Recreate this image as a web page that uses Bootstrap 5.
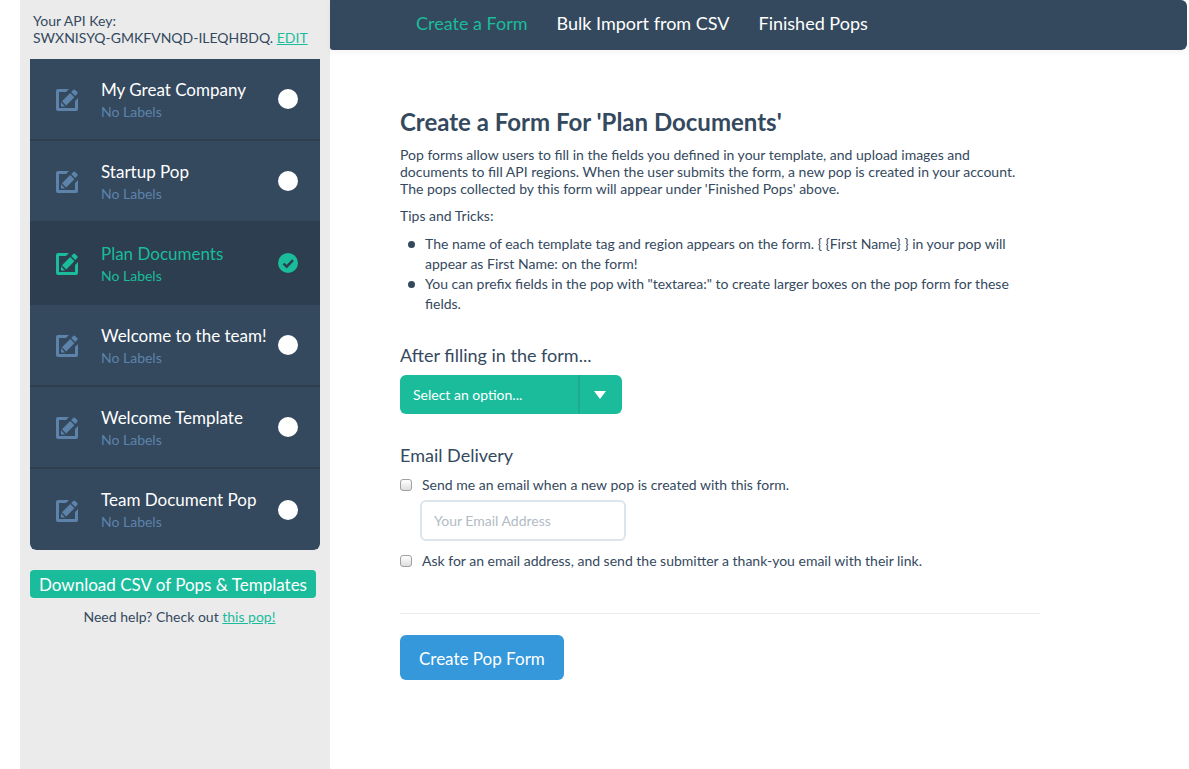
<!DOCTYPE html>
<html lang="en">
<head>
<meta charset="utf-8">
<meta name="viewport" content="width=device-width, initial-scale=1">
<title>Create a Form</title>
<link href="https://cdn.jsdelivr.net/npm/bootstrap@5.3.0/dist/css/bootstrap.min.css" rel="stylesheet">
<style>
  :root { --navy: #34495e; --navy-dark: #2c3e50; --teal: #1abc9c; --steel: #5d83ab; }
  body { font: 14px/17px Lato, sans-serif; color: var(--navy); background: #fff; }
  a { color: var(--teal); }
  .side { flex: 0 0 310px; min-width: 0; margin-left: 20px; padding: 12px 10px; background: #ebebeb; }
  .api-key { padding: 0 3px; margin-bottom: 13px; }
  .pop-list { border-radius: 0 0 6px 6px; overflow: hidden; margin-bottom: 20px; }
  .pop-item { display: flex; align-items: center; height: 82px; padding: 2px 22px 2px 26px; border: 0; border-bottom: 2px solid var(--navy-dark); border-radius: 0; background: var(--navy); color: #fff; cursor: pointer; }
  .pop-item:last-child { border-bottom: 0; height: 81px; }
  .pop-item .glyph { width: 22px; height: 22px; margin: 2px 23px 0 0; color: var(--steel); flex: none; }
  .pop-name { font-size: 17px; line-height: 23px; white-space: nowrap; }
  .pop-labels { color: var(--steel); line-height: 22px; }
  .pop-text { padding-top: 2px; }
  .pop-item.chosen { background: var(--navy-dark); color: var(--teal); }
  .chosen .glyph, .chosen .pop-labels { color: var(--teal); }
  .pop-item .form-check-input { width: 20px; height: 20px; margin: 0 0 0 auto; border: 0; flex: none; background-color: #fff; }
  .pop-item .form-check-input:checked { background-color: var(--teal); background-size: 20px; background-image: url("data:image/svg+xml,%3Csvg xmlns='http://www.w3.org/2000/svg' viewBox='0 0 20 20'%3E%3Cpath d='M5.5 10.5l3.2 3.2L15 7.2' fill='none' stroke='%232c3e50' stroke-width='2.4'/%3E%3C/svg%3E"); }
  .btn-csv { --bs-btn-color: #fff; --bs-btn-bg: var(--teal); --bs-btn-hover-color: #fff; --bs-btn-hover-bg: #48c9b0; border: 0; border-radius: 4px; font-size: 17px; line-height: 26px; padding: 2px 9px 0; white-space: nowrap; }
  .help { margin: 10px 0 0; padding-left: 9px; }
  .topbar { height: 50px; margin-right: 2px; padding: 0 71px; background: var(--navy); border-radius: 0 6px 6px 3px; box-shadow: 0 2px 6px rgba(0,0,0,.05); }
  .topbar .nav-link { font-size: 18px; line-height: 22px; padding: 12px 14px 12px 15px; color: #fff; }
  .topbar .nav-link.active { color: var(--teal); }
  .form-area { max-width: 640px; padding: 58px 0 40px; margin: 0 70px; }
  h1 { font-size: 24px; line-height: 28px; font-weight: 700; margin-bottom: 10px; }
  h2 { font-size: 18px; line-height: 22px; font-weight: 400; margin: 0 0 9px; }
  .form-area p { margin-bottom: 10px; }
  .tips { line-height: 20px; padding-left: 25px; margin: 0 0 30px; list-style: none; }
  .tips li { position: relative; }
  .tips li::before { content: ""; position: absolute; left: -17px; top: 7px; width: 7px; height: 7px; border-radius: 50%; background: var(--navy); }
  .option-select { display: block; width: 222px; max-width: 100%; height: 39px; padding: 0 50px 0 13px; border: 0; border-radius: 6px; color: #fff; font-size: 14px; background-color: var(--teal); appearance: none;
    background-image: url("data:image/svg+xml,%3Csvg xmlns='http://www.w3.org/2000/svg' width='44' height='39'%3E%3Cpath d='M0 0h2v39H0z' fill='%2334495e' fill-opacity='.15'/%3E%3Cpath d='M16 16h12l-6 8z' fill='%23fff'/%3E%3C/svg%3E"); background-repeat: no-repeat; background-position: right center; margin-bottom: 30px; }
  .tick { display: flex; align-items: center; gap: 10px; padding-top: 1px; }
  .tick input { appearance: none; width: 12px; height: 12px; margin: 0; flex: none; border: 1px solid #a0a0a0; border-radius: 3px; background: linear-gradient(#fff, #dedede); }
  .tick input:checked { background: var(--teal); }
  .email-box { width: 206px; height: 41px; margin: 7px 0 10px 20px; padding: 0 12px; border: 2px solid #dce4ec; border-radius: 6px; font-size: 14px; color: var(--navy); }
  .email-box::placeholder { color: #b2bcc5; opacity: 1; }
  hr { margin: 44px 0 21px; border-color: #eaeaea; opacity: 1; }
  .btn-create { --bs-btn-color: #fff; --bs-btn-bg: #3498db; --bs-btn-hover-color: #fff; --bs-btn-hover-bg: #5dade2; border: 0; border-radius: 6px; font-size: 17px; line-height: 25px; padding: 11px 19px 9px; }
</style>
</head>
<body>
<svg class="d-none" aria-hidden="true">
  <symbol id="edit" viewBox="0 0 22 22">
    <path d="M13 0H2Q0 0 0 2v18q0 2 2 2h18q2 0 2-2V9l-3 3v7H3V3h7z" fill="currentColor"/>
    <path d="M6 12.200L14.200 4l4.200 4.200L10.200 16.400zM5 13.300L9 17.500H5zM15.200 3l2-2q1-1 2 0l2 2q1 1 0 2l-2 2z" fill="currentColor"/>
  </symbol>
</svg>
<div class="d-flex min-vh-100">
  <aside class="side">
    <p class="api-key">Your API Key:<br>SWXNISYQ-GMKFVNQD-ILEQHBDQ. <a href="#">EDIT</a></p>
    <div class="list-group pop-list">
      <label class="list-group-item pop-item"><svg class="glyph"><use href="#edit"/></svg><span class="pop-text"><span class="d-block pop-name">My Great Company</span><span class="d-block pop-labels">No Labels</span></span><input class="form-check-input" type="radio" name="pop"></label>
      <label class="list-group-item pop-item"><svg class="glyph"><use href="#edit"/></svg><span class="pop-text"><span class="d-block pop-name">Startup Pop</span><span class="d-block pop-labels">No Labels</span></span><input class="form-check-input" type="radio" name="pop"></label>
      <label class="list-group-item pop-item chosen"><svg class="glyph"><use href="#edit"/></svg><span class="pop-text"><span class="d-block pop-name">Plan Documents</span><span class="d-block pop-labels">No Labels</span></span><input class="form-check-input" type="radio" name="pop" checked></label>
      <label class="list-group-item pop-item"><svg class="glyph"><use href="#edit"/></svg><span class="pop-text"><span class="d-block pop-name">Welcome to the team!</span><span class="d-block pop-labels">No Labels</span></span><input class="form-check-input" type="radio" name="pop"></label>
      <label class="list-group-item pop-item"><svg class="glyph"><use href="#edit"/></svg><span class="pop-text"><span class="d-block pop-name">Welcome Template</span><span class="d-block pop-labels">No Labels</span></span><input class="form-check-input" type="radio" name="pop"></label>
      <label class="list-group-item pop-item"><svg class="glyph"><use href="#edit"/></svg><span class="pop-text"><span class="d-block pop-name">Team Document Pop</span><span class="d-block pop-labels">No Labels</span></span><input class="form-check-input" type="radio" name="pop"></label>
    </div>
    <button type="button" class="btn btn-csv">Download CSV of Pops &amp; Templates</button>
    <p class="help text-center">Need help? Check out <a href="#">this pop!</a></p>
  </aside>
  <div class="flex-grow-1">
    <nav class="topbar">
      <div class="nav">
        <a class="nav-link active" href="#">Create a Form</a>
        <a class="nav-link" href="#">Bulk Import from CSV</a>
        <a class="nav-link" href="#">Finished Pops</a>
      </div>
    </nav>
    <main class="form-area">
      <h1>Create a Form For 'Plan Documents'</h1>
      <p>Pop forms allow users to fill in the fields you defined in your template, and upload images and documents to fill API regions. When the user submits the form, a new pop is created in your account. The pops collected by this form will appear under 'Finished Pops' above.</p>
      <p>Tips and Tricks:</p>
      <ul class="tips">
        <li>The name of each template tag and region appears on the form. { {First Name} } in your pop will appear as First Name: on the form!</li>
        <li>You can prefix fields in the pop with "textarea:" to create larger boxes on the pop form for these fields.</li>
      </ul>
      <form>
        <h2><label for="after">After filling in the form...</label></h2>
        <select class="option-select" id="after"><option>Select an option...</option></select>
        <h2>Email Delivery</h2>
        <label class="tick"><input type="checkbox">Send me an email when a new pop is created with this form.</label>
        <input class="email-box" type="email" placeholder="Your Email Address" aria-label="Your Email Address">
        <label class="tick"><input type="checkbox">Ask for an email address, and send the submitter a thank-you email with their link.</label>
        <hr>
        <button type="button" class="btn btn-create">Create Pop Form</button>
      </form>
    </main>
  </div>
</div>
<script src="https://cdn.jsdelivr.net/npm/bootstrap@5.3.0/dist/js/bootstrap.bundle.min.js"></script>
</body>
</html>
